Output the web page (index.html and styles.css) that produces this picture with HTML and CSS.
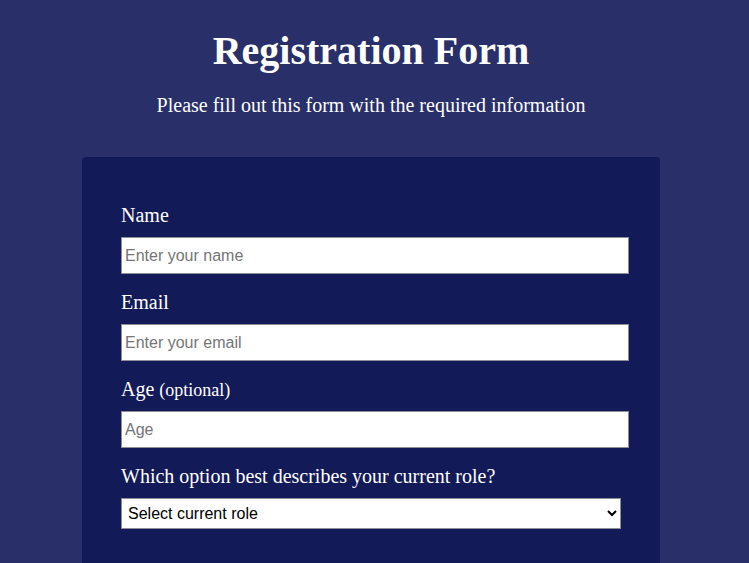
FILE: index.html
```html
<!DOCTYPE html>
<html lang="en">
<head>
<meta charset="utf-8">
<title>Registration Form</title>
<link rel="stylesheet" href="styles.css">
</head>
<body>
<div class="page">
  <header class="header">
    <h1 class="title">Registration Form</h1>
    <p class="subtitle">Please fill out this form with the required information</p>
  </header>
  <form class="card">
    <div class="group">
      <label class="label" for="name">Name</label>
      <input class="field" id="name" type="text" placeholder="Enter your name">
    </div>
    <div class="group">
      <label class="label" for="email">Email</label>
      <input class="field" id="email" type="email" placeholder="Enter your email">
    </div>
    <div class="group">
      <label class="label" for="age">Age <span class="hint">(optional)</span></label>
      <input class="field" id="age" type="number" placeholder="Age">
    </div>
    <div class="group">
      <label class="label" for="role">Which option best describes your current role?</label>
      <select class="dropdown" id="role">
        <option>Select current role</option>
        <option>Student</option>
        <option>Full Time Job</option>
        <option>Full Time Learner</option>
        <option>Prefer not to say</option>
        <option>Other</option>
      </select>
    </div>
  </form>
</div>
</body>
</html>
```
FILE: styles.css
```css
html, body {
  margin: 0;
  padding: 0;
}

body {
  background: #292f69;
  color: #ffffff;
  font-family: "Liberation Serif", "Times New Roman", serif;
  overflow: hidden;
}

.page {
  width: 742px;
  display: flex;
  flex-direction: column;
  align-items: center;
}

.header {
  text-align: center;
}

.title {
  margin: 27px 0 0;
  font-size: 40px;
  font-weight: bold;
  line-height: normal;
}

.subtitle {
  margin: 20px 0 0;
  font-size: 20px;
  line-height: normal;
}

.card {
  box-sizing: border-box;
  width: 578px;
  min-height: 460px;
  margin-top: 40px;
  padding: 47px 39px 40px;
  background: #131a58;
  border-radius: 4px;
  display: flex;
  flex-direction: column;
  gap: 17px;
}

.group {
  display: flex;
  flex-direction: column;
  align-items: flex-start;
}

.label {
  font-size: 20px;
  line-height: normal;
}

.hint {
  font-size: 18px;
}

.field {
  box-sizing: content-box;
  width: 100%;
  height: 33px;
  margin: 10px 0 0;
  padding: 1px 3px;
  border: 1px solid #8d8d95;
  border-radius: 0;
  background: #ffffff;
  color: #000000;
  font-family: "Liberation Sans", Arial, sans-serif;
  font-size: 16px;
  outline: none;
}

.field::placeholder {
  color: #757575;
}

.dropdown {
  box-sizing: border-box;
  width: 100%;
  height: 31px;
  margin: 10px 0 0;
  padding: 0 2px;
  border: 1px solid #8d8d95;
  border-radius: 0;
  background: #ffffff;
  color: #000000;
  font-family: "Liberation Sans", Arial, sans-serif;
  font-size: 16px;
}
```
